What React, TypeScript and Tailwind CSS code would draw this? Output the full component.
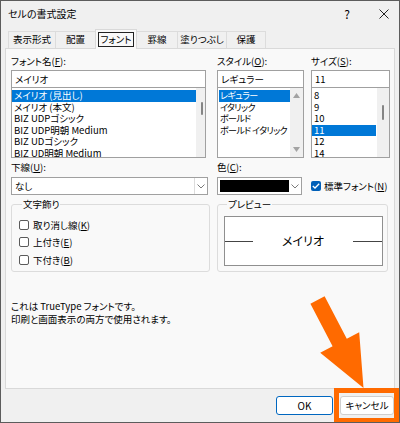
import React from "react";

const FONT = "font-['Noto_Sans_CJK_JP','Noto_Sans',sans-serif] [font-feature-settings:'palt']";

function Acc({ pre, k, post = "" }: { pre: string; k: string; post?: string }) {
  return (
    <span className="whitespace-nowrap">
      {pre}(<span className="underline underline-offset-1">{k}</span>){post}
    </span>
  );
}

function Chevron() {
  return (
    <svg width="8" height="5" viewBox="0 0 8 5">
      <path d="M0.5 0.5 L4 4 L7.5 0.5" fill="none" stroke="#7a7a7a" strokeWidth="1" />
    </svg>
  );
}

function CheckBox({ checked = false }: { checked?: boolean }) {
  return checked ? (
    <div className="w-[10px] h-[10px] shrink-0 rounded-[2px] bg-[#005fb8] flex items-center justify-center">
      <svg width="8" height="6" viewBox="0 0 8 6">
        <path d="M0.8 3 L3 5 L7.2 0.8" fill="none" stroke="#fff" strokeWidth="1.3" />
      </svg>
    </div>
  ) : (
    <div className="w-[10px] h-[10px] shrink-0 rounded-[2px] border border-[#5a5a5a] bg-white" />
  );
}

const fontItems = [
  "メイリオ (見出し)",
  "メイリオ (本文)",
  "BIZ UDPゴシック",
  "BIZ UDP明朝 Medium",
  "BIZ UDゴシック",
  "BIZ UD明朝 Medium",
];
const styleItems = ["レギュラー", "イタリック", "ボールド", "ボールド イタリック"];
const sizeItems = ["8", "9", "10", "11", "12", "14"];

export default function App() {
  return (
    <div className={`${FONT} relative w-[400px] h-[423px] border border-[#5c5c5c] bg-[#f0f0f0] text-black overflow-hidden text-[9.5px]`}>
      {/* title bar */}
      <div className="h-[28px] flex items-center pl-[7px] pr-[10px]">
        <span className="text-[10px] -mt-[3px]">セルの書式設定</span>
        <span className="ml-auto mr-[29px] text-[12px] -mt-[3px]">?</span>
        <svg width="10" height="10" viewBox="0 0 10 10" className="-mt-[3px]">
          <path d="M0.5 0.5 L9.5 9.5 M9.5 0.5 L0.5 9.5" stroke="#222" strokeWidth="1" />
        </svg>
      </div>

      {/* tabs */}
      <div className="h-[19px] flex items-end pl-[7px]">
        {["表示形式", "配置"].map((t, i) => (
          <div
            key={t}
            className={`h-[17px] ${i === 0 ? "w-[48px]" : "w-[41px] -ml-px"} border border-b-0 border-[#dcdcdc] bg-[#f0f0f0] flex items-center justify-center leading-none whitespace-nowrap`}
          >
            {t}
          </div>
        ))}
        <div className="relative z-10 -ml-px -mb-px h-[20px] w-[42px] border border-b-0 border-[#d9d9d9] bg-[#f9f9f9] p-[2px]">
          <div className="w-full h-full border border-[#222] flex items-center justify-center leading-none whitespace-nowrap">
            フォント
          </div>
        </div>
        {[
          ["罫線", "w-[42px]"],
          ["塗りつぶし", "w-[50px]"],
          ["保護", "w-[40px]"],
        ].map(([t, w]) => (
          <div
            key={t}
            className={`h-[17px] ${w} -ml-px border border-b-0 border-[#dcdcdc] bg-[#f0f0f0] flex items-center justify-center leading-none whitespace-nowrap`}
          >
            {t}
          </div>
        ))}
      </div>

      {/* panel */}
      <div className="mx-[4px] h-[341px] border border-[#d9d9d9] bg-[#f9f9f9] pl-[5px] pt-[5px]">
        {/* row 1 */}
        <div className="flex">
          {/* font name */}
          <div className="w-[195px]">
            <div className="h-[16px] leading-[14px]">
              <Acc pre="フォント名" k="F" post=":" />
            </div>
            <div className="h-[18px] border border-[#a0a0a0] bg-white pl-[3px] leading-[16px]">メイリオ</div>
            <div className="-mt-px h-[71px] border border-[#a0a0a0] bg-white flex overflow-hidden">
              <div className="flex-1 pt-[2px]">
                {fontItems.map((f, i) => (
                  <div
                    key={f}
                    className={`h-[11.5px] leading-[11.5px] pl-[2px] whitespace-nowrap ${i === 0 ? "bg-[#0078d7] text-white" : ""}`}
                  >
                    {f}
                  </div>
                ))}
              </div>
              <div className="w-[9px] bg-[#f0f0f0] pl-[5px] pt-[14px]">
                <div className="w-[2px] h-[13px] rounded-full bg-[#858585]" />
              </div>
            </div>
          </div>

          {/* style */}
          <div className="w-[87px] ml-[11px]">
            <div className="h-[16px] leading-[14px]">
              <Acc pre="スタイル" k="O" post=":" />
            </div>
            <div className="h-[18px] border border-[#a0a0a0] bg-white pl-[3px] leading-[16px]">レギュラー</div>
            <div className="-mt-px h-[71px] border border-[#a0a0a0] bg-white flex overflow-hidden">
              <div className="flex-1 min-w-0 pt-[2px] pl-[1px] text-[9px] tracking-[-0.6px]">
                {styleItems.map((f, i) => (
                  <div
                    key={f}
                    className={`h-[11.5px] leading-[11.5px] pl-[1px] whitespace-nowrap ${i === 0 ? "bg-[#0078d7] text-white" : ""}`}
                  >
                    {f}
                  </div>
                ))}
              </div>
              <div className="w-[13px] shrink-0 bg-[#f0f0f0] flex flex-col items-center justify-between py-[5px]">
                <svg width="7" height="5" viewBox="0 0 7 5">
                  <path d="M3.5 0 L7 5 L0 5 Z" fill="#a3a3a3" />
                </svg>
                <svg width="7" height="5" viewBox="0 0 7 5">
                  <path d="M0 0 L7 0 L3.5 5 Z" fill="#a3a3a3" />
                </svg>
              </div>
            </div>
          </div>

          {/* size */}
          <div className="w-[79px] ml-[7px]">
            <div className="h-[16px] leading-[14px]">
              <Acc pre="サイズ" k="S" post=":" />
            </div>
            <div className="h-[18px] border border-[#a0a0a0] bg-white pl-[3px] leading-[16px]">11</div>
            <div className="-mt-px h-[71px] border border-[#a0a0a0] bg-white flex overflow-hidden">
              <div className="flex-1 pt-[2px] pr-[1px]">
                {sizeItems.map((f, i) => (
                  <div
                    key={f}
                    className={`h-[11.5px] leading-[11.5px] pl-[2px] ${i === 3 ? "bg-[#0078d7] text-white" : ""}`}
                  >
                    {f}
                  </div>
                ))}
              </div>
              <div className="w-[12px] bg-[#f0f0f0] flex justify-center pt-[17px]">
                <div className="w-[2px] h-[15px] rounded-full bg-[#858585]" />
              </div>
            </div>
          </div>
        </div>

        {/* row 2 */}
        <div className="flex mt-[2px]">
          <div className="w-[197px]">
            <div className="h-[16px] leading-[14px]">
              <Acc pre="下線" k="U" post=":" />
            </div>
            <div className="mt-[1px] h-[18px] border border-[#a0a0a0] bg-white flex items-center">
              <span className="pl-[3px] flex-1 leading-[16px]">なし</span>
              <div className="w-px h-full bg-[#dcdcdc]" />
              <div className="w-[12px] flex justify-center">
                <Chevron />
              </div>
            </div>
          </div>
          <div className="w-[85px] ml-[9px]">
            <div className="h-[16px] leading-[14px]">
              <Acc pre="色" k="C" post=":" />
            </div>
            <div className="mt-[1px] h-[18px] border border-[#a0a0a0] bg-white flex items-center pl-[2px]">
              <div className="w-[69px] h-[12px] bg-black" />
              <div className="flex-1 flex justify-center">
                <Chevron />
              </div>
            </div>
          </div>
          <div className="ml-[9px] pt-[17px] h-[35px] flex items-center gap-[3px]">
            <CheckBox checked />
            <Acc pre="標準フォント" k="N" />
          </div>
        </div>

        {/* row 3: groups */}
        <div className="flex mt-[3px]">
          <fieldset className="w-[199px] h-[74px] border border-[#dcdcdc] rounded-[3px] pl-[7px] pt-[6px]">
            <legend className="ml-[3px] px-[1px] leading-[12px]">文字飾り</legend>
            {[
              ["取り消し線", "K"],
              ["上付き", "E"],
              ["下付き", "B"],
            ].map(([l, k]) => (
              <div key={k} className="h-[17.5px] flex items-center gap-[4px]">
                <CheckBox />
                <Acc pre={l} k={k} />
              </div>
            ))}
          </fieldset>
          <fieldset className="ml-[7px] w-[171px] h-[74px] border border-[#dcdcdc] rounded-[3px] pl-[6px] pt-[6px]">
            <legend className="ml-[3px] px-[1px] leading-[12px]">プレビュー</legend>
            <div className="w-[159px] h-[50px] border border-[#8f8f8f] bg-white flex items-center">
              <div className="w-[28px] h-px bg-[#444]" />
              <div className="flex-1 text-center text-[12px] leading-none">メイリオ</div>
              <div className="w-[29px] h-px bg-[#444]" />
            </div>
          </fieldset>
        </div>

        {/* info */}
        <div className="mt-[28px] leading-[13px]">
          <div>これは TrueType フォントです。</div>
          <div>印刷と画面表示の両方で使用されます。</div>
        </div>
      </div>

      {/* footer */}
      <div className="flex justify-end gap-[7px] pr-[5px] pt-[7px]">
        <button className="w-[57px] h-[19px] rounded-[3px] border border-[#0067c0] bg-white text-[10px] leading-none">
          OK
        </button>
        <button className="w-[54px] h-[19px] rounded-[3px] border border-[#cfcfcf] bg-white text-[9.5px] leading-none whitespace-nowrap">
          キャンセル
        </button>
      </div>

      {/* overlays: highlight rect + arrow */}
      <div className="absolute left-[333px] top-[387px] w-[65px] h-[35px] border-[5px] border-[#ff6a00]" />
      <svg className="absolute left-[-1px] top-[-1px]" width="400" height="423" viewBox="0 0 400 423">
        <polygon
          points="310.4,303.7 324.6,296.3 346.8,338.8 359.2,332.3 363.5,388 320.2,352.7 332.6,346.2"
          fill="#ff6a00"
        />
      </svg>
    </div>
  );
}
